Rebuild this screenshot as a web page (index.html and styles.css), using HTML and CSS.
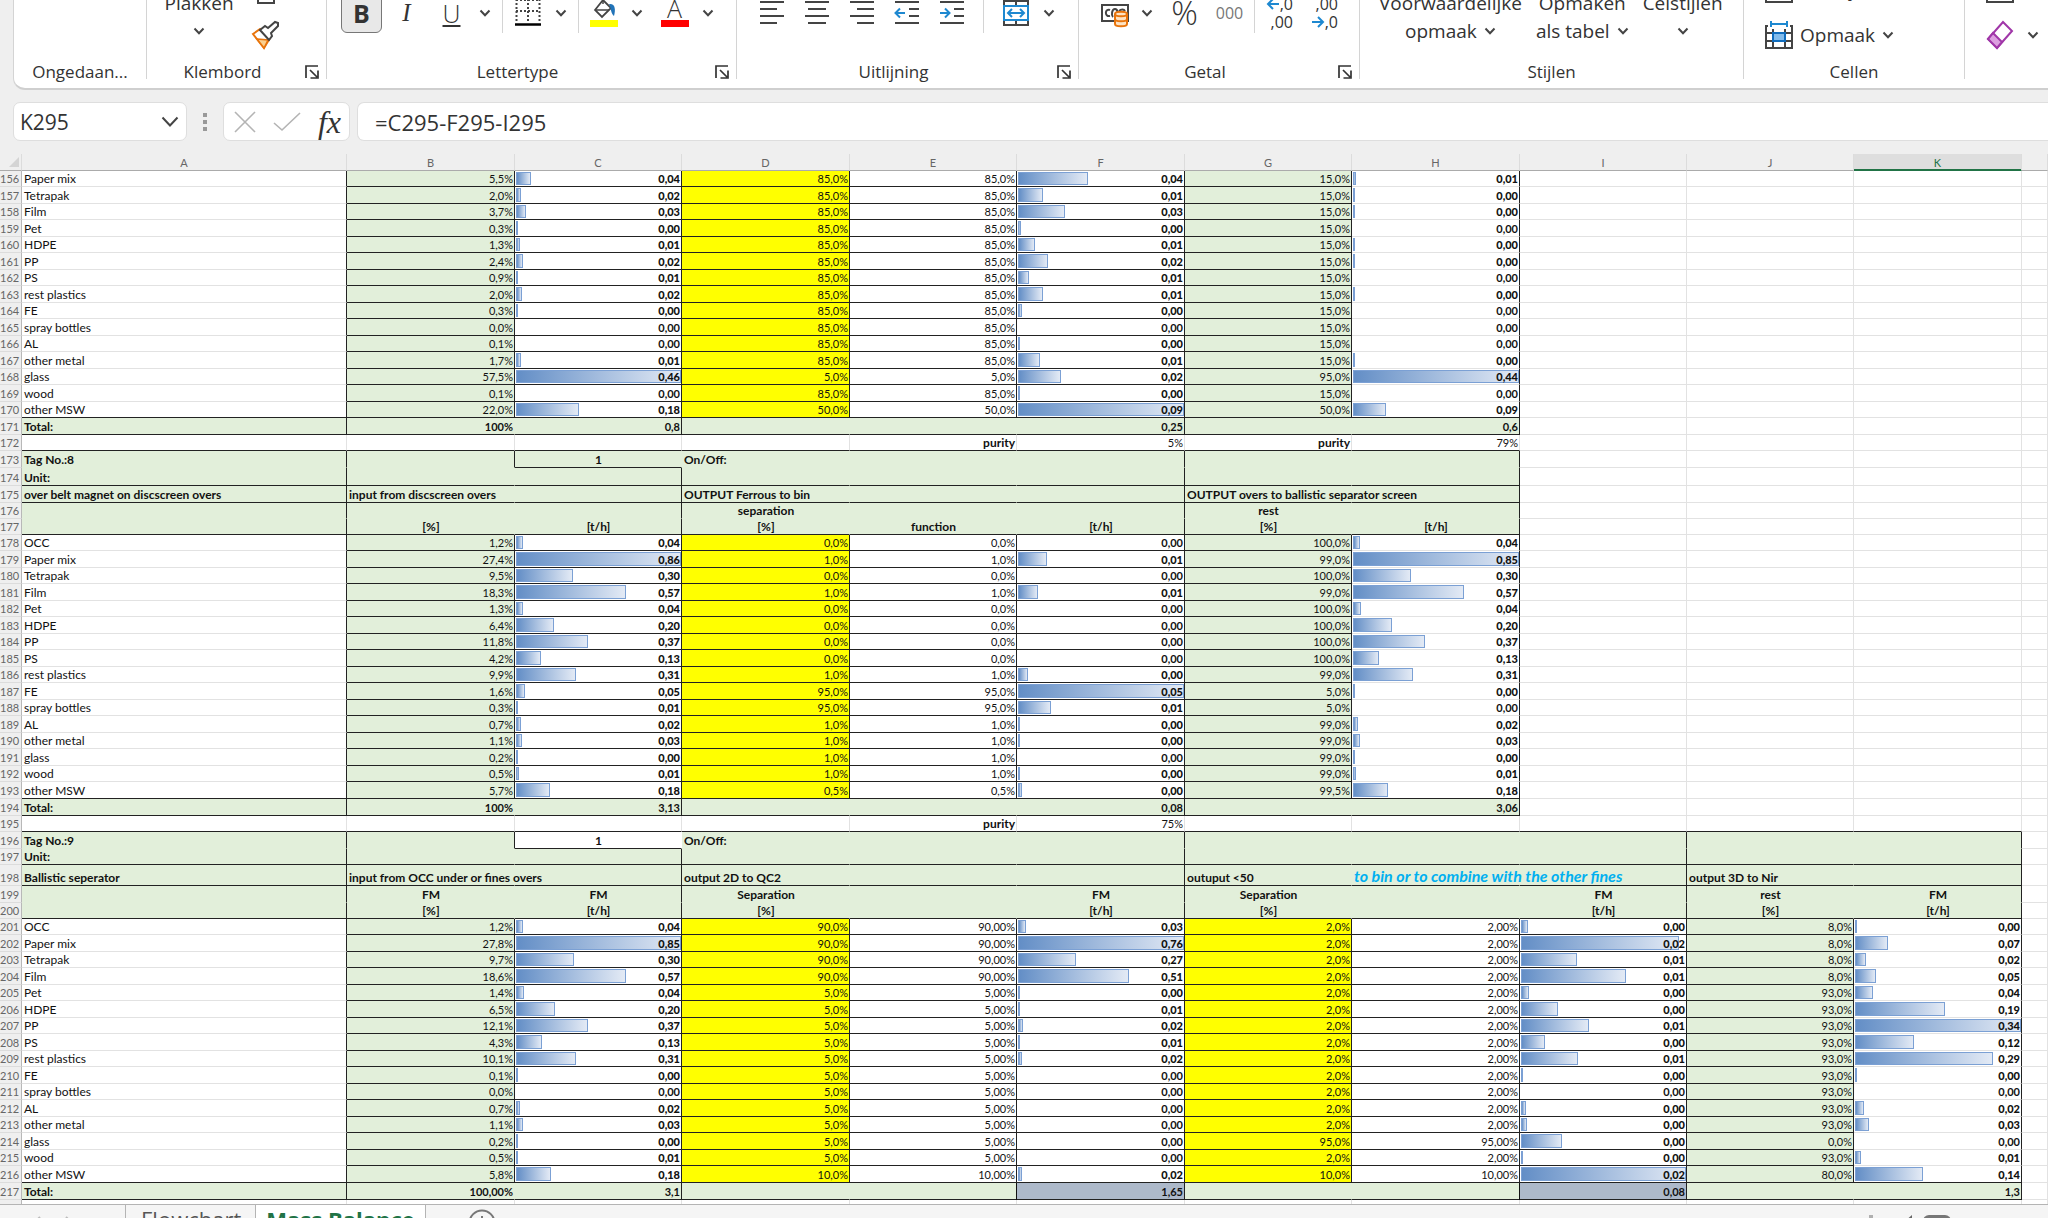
FILE: index.html
```html
<!DOCTYPE html>
<html lang="nl">
<head>
<meta charset="utf-8">
<title>Mass Balance</title>
<link rel="stylesheet" href="styles.css">
</head>
<body>
<svg class="defs" aria-hidden="true">
  <symbol id="chev" viewBox="0 0 12 8"><path d="M1.5 1.5 6 6.2 10.500 1.5" fill="none" stroke="#444" stroke-width="2"/></symbol>
  <symbol id="launch" viewBox="0 0 14 14"><path d="M1 13V1H13M5 5l7 7M13 5.500V13H5.500" fill="none" stroke="#333" stroke-width="1.700"/></symbol>
</svg>
<div class="app">
  <header class="ribbon">
    <section class="group g-undo">
      <div class="tools"></div>
      <div class="caption"><span>Ongedaan...</span></div>
    </section>
    <section class="group g-clip">
      <div class="tools">
        <button class="big paste">Plakken<span class="line"><svg class="chev"><use href="#chev"/></svg></span></button>
        <div class="stack">
          <button class="tool" aria-label="Kopiëren"><svg width="28" height="28" viewBox="0 0 28 28"><path d="M6 2h16v25H6z" fill="#fff" stroke="#444" stroke-width="2"/></svg></button>
          <button class="tool" aria-label="Opmaak kopiëren"><svg width="28" height="28" viewBox="0 0 28 28"><path d="M1 13 8 8l10 9-6 10Z" fill="#fff" stroke="#e8740c" stroke-width="2"/><path d="M5 18l11 1-4 8Z" fill="#fbd08f" stroke="#e8740c" stroke-width="1.500"/><path d="M8 9l5-4 3 2 7-6 3 1v3l-7 7 1 3-3 4Z" fill="#fff" stroke="#444" stroke-width="2"/></svg></button>
        </div>
      </div>
      <div class="caption"><span>Klembord</span><button class="launcher" aria-label="Klembord openen"><svg><use href="#launch"/></svg></button></div>
    </section>
    <section class="group g-font">
      <div class="tools upper">
        <button class="tool pressed"><b>B</b></button>
        <button class="tool"><i>I</i></button>
        <div class="split"><button class="tool light"><u>U</u></button><button class="drop" aria-label="Onderstrepen"><svg class="chev"><use href="#chev"/></svg></button></div>
        <span class="rule"></span>
        <div class="split"><button class="tool" aria-label="Randen"><svg width="28" height="28" viewBox="0 0 28 28"><path d="M2.500 0V23M25.500 0V23M14 0v23M2 1H26M2 12H26" fill="none" stroke="#444" stroke-width="2" stroke-dasharray="2 2"/><path d="M1 25.500H27" stroke="#000" stroke-width="2.500"/></svg></button><button class="drop" aria-label="Randen kiezen"><svg class="chev"><use href="#chev"/></svg></button></div>
        <span class="rule"></span>
        <div class="split"><button class="tool" aria-label="Opvulkleur"><svg width="28" height="28" viewBox="0 0 28 28"><path d="M0 21H28v7H0z" fill="#ff0"/><path d="M5 11 13 1l8 8-9 9Z" fill="#fff" stroke="#444" stroke-width="1.800"/><path d="M13 5V-3M5 11h14" stroke="#444" stroke-width="1.500"/><path d="M19 5c6-1 7 5 5 12-3-2-3-8-5-12" fill="#2173b8"/></svg></button><button class="drop" aria-label="Opvulkleur kiezen"><svg class="chev"><use href="#chev"/></svg></button></div>
        <div class="split"><button class="tool letter" aria-label="Tekstkleur">A</button><button class="drop" aria-label="Tekstkleur kiezen"><svg class="chev"><use href="#chev"/></svg></button></div>
      </div>
      <div class="caption"><span>Lettertype</span><button class="launcher" aria-label="Lettertype openen"><svg><use href="#launch"/></svg></button></div>
    </section>
    <section class="group g-align">
      <div class="tools upper">
        <button class="tool" aria-label="Links uitlijnen"><svg width="28" height="28" viewBox="0 0 28 28"><path d="M2 3H26M2 10H19M2 17H26M2 24H19" stroke="#444" stroke-width="2"/></svg></button>
        <button class="tool" aria-label="Centreren"><svg width="28" height="28" viewBox="0 0 28 28"><path d="M2 3H26M5 10H23M2 17H26M5 24H23" stroke="#444" stroke-width="2"/></svg></button>
        <button class="tool" aria-label="Rechts uitlijnen"><svg width="28" height="28" viewBox="0 0 28 28"><path d="M2 3H26M9 10H26M2 17H26M9 24H26" stroke="#444" stroke-width="2"/></svg></button>
        <button class="tool" aria-label="Inspringing verkleinen"><svg width="28" height="28" viewBox="0 0 28 28"><path d="M2 3H26M16 10H26M16 17H26M2 24H26" stroke="#444" stroke-width="2"/><path d="M12 14H3M7 9.500 2.500 14 7 18.500" fill="none" stroke="#1e88d0" stroke-width="2"/></svg></button>
        <button class="tool" aria-label="Inspringing vergroten"><svg width="28" height="28" viewBox="0 0 28 28"><path d="M2 3H26M16 10H26M16 17H26M2 24H26" stroke="#444" stroke-width="2"/><path d="M2 14H11M7 9.500 11.500 14 7 18.500" fill="none" stroke="#1e88d0" stroke-width="2"/></svg></button>
        <span class="rule wide"></span>
        <div class="split"><button class="tool" aria-label="Samenvoegen"><svg width="28" height="28" viewBox="0 0 28 28"><path d="M2 2H26V26H2ZM14 2V7M14 21V26" fill="#fff" stroke="#444" stroke-width="2"/><path d="M2 7H26V21H2Z" fill="#fff" stroke="#1e88d0" stroke-width="2"/><path d="M6 14H22M10 10 6 14l4 4M18 10l4 4-4 4" fill="none" stroke="#1e88d0" stroke-width="2"/></svg></button><button class="drop" aria-label="Samenvoegen kiezen"><svg class="chev"><use href="#chev"/></svg></button></div>
      </div>
      <div class="caption"><span>Uitlijning</span><button class="launcher" aria-label="Uitlijning openen"><svg><use href="#launch"/></svg></button></div>
    </section>
    <section class="group g-number">
      <div class="tools upper">
        <div class="split"><button class="tool" aria-label="Valuta"><svg width="28" height="28" viewBox="0 0 28 28"><path d="M2 6H28V22H2Z" fill="#fff" stroke="#444" stroke-width="2"/><path d="M10 11c-5-2-6 7 0 6M13 18c-2-2-1-8 2-8 3 0 3 5 1 7M19 12c2-2 5-2 6 0" fill="none" stroke="#444" stroke-width="2"/><path d="M15 15c0-3 12-3 12 0V25c0 3-12 3-12 0Z" fill="#fde3c4" stroke="#e8740c" stroke-width="2"/><path d="M15 15c0 3 12 3 12 0M15 20c0 3 12 3 12 0" fill="none" stroke="#e8740c" stroke-width="2"/></svg></button><button class="drop" aria-label="Valuta kiezen"><svg class="chev"><use href="#chev"/></svg></button></div>
        <button class="tool light percent">%</button>
        <button class="tool zeros">000</button>
        <span class="rule"></span>
        <button class="tool dec"><span><svg width="14" height="12" viewBox="0 0 14 12"><path d="M13 6H2M7 1 2 6l5 5" fill="none" stroke="#1e88d0" stroke-width="2"/></svg>,0</span><span>,00</span></button>
        <button class="tool dec"><span>,00</span><span><svg width="14" height="12" viewBox="0 0 14 12"><path d="M1 6H12M7 1l5 5-5 5" fill="none" stroke="#1e88d0" stroke-width="2"/></svg>,0</span></button>
      </div>
      <div class="caption"><span>Getal</span><button class="launcher" aria-label="Getal openen"><svg><use href="#launch"/></svg></button></div>
    </section>
    <section class="group g-styles">
      <div class="tools">
        <button class="big">Voorwaardelijke<span class="line">opmaak <svg class="chev"><use href="#chev"/></svg></span></button>
        <button class="big">Opmaken<span class="line">als tabel <svg class="chev"><use href="#chev"/></svg></span></button>
        <button class="big">Celstijlen<span class="line"><svg class="chev"><use href="#chev"/></svg></span></button>
      </div>
      <div class="caption"><span>Stijlen</span></div>
    </section>
    <section class="group g-cells">
      <div class="tools">
        <div class="stack">
          <button class="wide-tool"><svg width="28" height="28" viewBox="0 0 28 28"><path d="M1 2H27V26H1Z" fill="#fff" stroke="#444" stroke-width="2"/></svg>Verwijderen</button>
          <button class="wide-tool"><svg width="28" height="28" viewBox="0 0 28 28"><path d="M3 5H1V27H27V5H25M1 12H27M1 20H27M8 8V27M20 8V27" fill="none" stroke="#444" stroke-width="2"/><path d="M8 12H20V20H8Z" fill="#83bcec" stroke="#0f6cbd" stroke-width="2"/><path d="M6 3H22M6 0V6M22 0V6" stroke="#1e88d0" stroke-width="2"/></svg>Opmaak<svg class="chev"><use href="#chev"/></svg></button>
        </div>
      </div>
      <div class="caption"><span>Cellen</span></div>
    </section>
    <section class="group g-edit">
      <div class="tools">
        <div class="stack">
          <button class="tool" aria-label="Doorvoeren"><svg width="28" height="28" viewBox="0 0 28 28"><path d="M1 2H27V26H1Z" fill="#fff" stroke="#444" stroke-width="2"/></svg></button>
          <div class="split"><button class="tool" aria-label="Wissen"><svg width="28" height="28" viewBox="0 0 28 28"><path d="M17 1 26 10 11 27 2 18Z" fill="#fff" stroke="#a036a8" stroke-width="2"/><path d="M7 12 2 18l9 9 5-6Z" fill="#dc9fe0" stroke="#a036a8" stroke-width="2"/></svg></button><button class="drop" aria-label="Wissen kiezen"><svg class="chev"><use href="#chev"/></svg></button></div>
        </div>
      </div>
      <div class="caption"></div>
    </section>
  </header>

  <div class="formula-row">
    <div class="box name-box">
      <input type="text" value="K295" aria-label="Naamvak">
      <button aria-label="Naam kiezen"><svg width="18" height="11" viewBox="0 0 18 11"><path d="M1.500 1.500 9 9.500l7.500-8" fill="none" stroke="#444" stroke-width="2"/></svg></button>
    </div>
    <span class="grip"><i></i><i></i><i></i></span>
    <div class="box fx-box">
      <button aria-label="Annuleren"><svg width="22" height="22" viewBox="0 0 22 22"><path d="M1 1 21 21M21 1 1 21" stroke="#b4b4b4" stroke-width="1.600"/></svg></button>
      <button aria-label="Invoeren"><svg width="28" height="20" viewBox="0 0 28 20"><path d="M1 11 9 18 27 1" fill="none" stroke="#b4b4b4" stroke-width="1.600"/></svg></button>
      <button class="fx">fx</button>
    </div>
    <div class="box formula"><input type="text" value="=C295-F295-I295" aria-label="Formule"></div>
  </div>

  <main class="sheet">
    <table class="grid">
      <colgroup><col class="c-num"><col class="c-a"><col class="c-w"><col class="c-n"><col class="c-w"><col class="c-n"><col class="c-w"><col class="c-n"><col class="c-w"><col class="c-n"><col class="c-n"><col class="c-w"><col></colgroup>
      <thead><tr><th class="corner"><svg width="10" height="10"><path d="M10 0V10H0Z" fill="#d4d4d4"/></svg></th><th>A</th><th>B</th><th>C</th><th>D</th><th>E</th><th>F</th><th>G</th><th>H</th><th>I</th><th>J</th><th class="current">K</th><th></th></tr></thead>
      <tbody id="rows"></tbody>
    </table>
  </main>

  <footer class="tabs">
    <div class="nav"><svg width="8" height="12" viewBox="0 0 8 12"><path d="M7 1 2 6l5 5" fill="none" stroke="#bbb" stroke-width="2"/></svg><svg width="8" height="12" viewBox="0 0 8 12"><path d="M1 1l5 5-5 5" fill="none" stroke="#bbb" stroke-width="2"/></svg></div>
    <button class="tab">Flowchart</button>
    <button class="tab active">Mass Balance</button>
    <button class="add" aria-label="Nieuw blad"><svg width="28" height="28" viewBox="0 0 28 28"><circle cx="14" cy="14" r="12.500" fill="none" stroke="#777" stroke-width="2"/><path d="M14 7V21M7 14H21" stroke="#777" stroke-width="2"/></svg></button>
    <div class="scroll"><span class="dots"></span><svg width="10" height="14" viewBox="0 0 10 14"><path d="M9 0V14L1 7Z" fill="#666"/></svg><span class="thumb"></span></div>
  </footer>
</div>
<script src="sheet.js"></script>
</body>
</html>
```
FILE: styles.css
```css
* { box-sizing: border-box; }
body { margin: 0; background: #efefef; color: #333; font-family: "Open Sans", "Noto Sans", sans-serif; }
button, input { font: inherit; color: inherit; background: none; border: 0; margin: 0; padding: 0; }
svg { display: block; flex: none; overflow: visible; }
.defs { position: absolute; width: 0; height: 0; }
.app { display: flex; flex-direction: column; height: 100vh; overflow: hidden; }

/* Ribbon */
.ribbon { display: flex; flex: none; height: 90px; margin-left: 13px; overflow: hidden; background: #fff; border-left: 1px solid #d4d4d4; border-bottom: 2px solid #cfcfcf; border-radius: 0 0 0 12px; }
.group { display: flex; flex: none; flex-direction: column; height: 83px; background: linear-gradient(#d4d4d4, #d4d4d4) right top / 1px 79px no-repeat; padding-right: 1px; }
.g-undo { width: 133px; }
.g-clip { width: 180px; }
.g-font { width: 410px; }
.g-align { width: 342px; }
.g-number { width: 281px; }
.g-styles { width: 384px; }
.g-cells { width: 221px; }
.g-edit { flex: 1; background: none; }
.tools { display: flex; flex: 1; min-height: 0; align-items: flex-end; gap: 4px; padding: 0 14px 16px; }
.tools.upper { padding-bottom: 28px; }
.caption { display: flex; flex: none; height: 22px; font-size: 17px; line-height: 22px; }
.caption span { flex: 1; text-align: center; }
.launcher { display: flex; width: 28px; height: 18px; align-items: flex-end; padding-left: 7px; }
.launcher svg { width: 14px; height: 14px; }
.tool { display: flex; width: 41px; height: 41px; align-items: center; justify-content: center; font-size: 25px; line-height: 30px; }
.tool i { font-family: "Liberation Serif", serif; }
.light { font-weight: 300; }
.pressed { background: #e8e8e8; border: 1px solid #777; border-radius: 6px; }
.letter { align-items: flex-end; padding-bottom: 10px; font-weight: 300; background: linear-gradient(#f00, #f00) center 28px / 28px 7px no-repeat; }
.split { display: flex; }
.drop { display: flex; width: 26px; align-items: center; justify-content: center; }
.chev { width: 12px; height: 8px; }
.rule { width: 1px; height: 41px; background: #d4d4d4; }
.rule.wide { margin: 0 7px; }
.percent { font-size: 33px; }
.zeros { font-size: 16px; color: #777; }
.dec { flex-direction: column; align-items: flex-end; padding-right: 7px; font-size: 16px; line-height: 18px; }
.dec span { display: flex; align-items: center; }
.big { display: flex; flex-direction: column; align-items: center; font-size: 19px; line-height: 28px; padding: 0 5px; }
.big .line { display: flex; height: 28px; align-items: center; gap: 7px; }
.paste { width: 76px; }
.stack { display: flex; flex-direction: column; gap: 4px; margin-bottom: -10px; }
.wide-tool { display: flex; height: 41px; align-items: center; gap: 7px; font-size: 19px; }
.g-clip .tools { gap: 8px; }
.g-cells .tools { padding-left: 21px; }

/* Formula bar */
.formula-row { display: flex; flex: none; height: 64px; padding: 12px 0 13px 13px; font-size: 21px; }
.box { display: flex; align-items: center; background: #fff; border: 1px solid #dedede; border-radius: 7px; }
.box input { width: 100%; min-width: 0; height: 100%; outline: 0; }
.name-box { width: 174px; padding: 0 7px 0 6px; }
.grip { display: flex; flex-direction: column; width: 36px; align-items: center; justify-content: center; gap: 3px; }
.grip i { width: 4px; height: 4px; background: #999; }
.fx-box { width: 127px; justify-content: space-between; padding: 0 8px 0 10px; }
.fx { font: italic 32px/36px "Liberation Serif", serif; }
.formula { flex: 1; margin-left: 7px; padding-left: 17px; border-right: 0; border-radius: 7px 0 0 7px; font-size: 22px; }

/* Worksheet */
.sheet { flex: 1; min-height: 0; overflow: hidden; }
.grid { width: 100%; table-layout: fixed; border-collapse: separate; border-spacing: 0; font-family: Lato, sans-serif; font-size: 11px; line-height: 15px; color: #111; background: #fff; }
.c-num { width: 22px; }
.c-a { width: 325px; }
.c-w { width: 168px; }
.c-n { width: 167px; }
.grid th { padding: 0; font-weight: 400; color: #666; background: #efefef; }
.grid thead th { height: 17px; border-right: 1px solid #dcdcdc; border-bottom: 1px solid #ababab; vertical-align: bottom; }
.grid thead .corner svg { margin: 0 0 3px 9px; }
.grid thead .current { color: #217346; background: #dedede; border-bottom-color: #217346; box-shadow: inset 0 -1px #217346; }
.grid tbody th { text-align: right; padding-right: 2px; border-right: 1px solid #b8b8b8; border-bottom: 1px solid #dcdcdc; vertical-align: bottom; }
.grid td { height: 16px; padding: 0 1px 0 2px; border-right: 1px solid #e2e2e2; border-bottom: 1px solid #e2e2e2; white-space: nowrap; vertical-align: bottom; text-align: right; }
.grid tr.h17 td { height: 17px; }
.grid tr.h18 td { height: 18px; }
.grid tr.h21 td { height: 21px; }
.grid td.l { text-align: left; font-size: 12px; }
.grid td.c { text-align: center; font-size: 12px; }
.grid td.big-text { font-size: 12px; }
.grid td.b { font-weight: 700; }
.grid td.green { background: #e2efda; border-color: #e2efda; }
.grid td.yellow { background: #ff0; }
.grid td.blue { background: #adb9ca; box-shadow: 0 -1px #111, -1px 0 #111; }
.grid td.white { background: #fff; border-color: #fff; }
.grid td.r { border-right-color: #222; }
.grid td.u { border-bottom-color: #222; }
.grid td.note { font-size: 16px; font-style: italic; color: #00b0f0; line-height: 19px; }
.grid td.bar { position: relative; }
.bar i { position: absolute; left: 1px; top: 1px; bottom: 1px; border: 1px solid #7ba0d4; background: linear-gradient(90deg, #638ec6, #e3eaf5); }
.bar b { position: relative; }

/* Sheet tabs */
.tabs { display: flex; flex: none; height: 14px; overflow: hidden; align-items: flex-start; background: #f5f5f5; border-top: 1px solid #b4b4b4; font-size: 22px; line-height: 28px; }
.nav { display: flex; gap: 24px; width: 125px; padding: 11px 0 0 33px; }
.tab { padding: 0 14px 0 15px; border-left: 1px solid #b4b4b4; color: #555; }
.tab.active { padding: 0 10px; background: #fff; border-right: 1px solid #b4b4b4; color: #217346; font-weight: 700; }
.add { padding: 4px 0 0 42px; }
.scroll { display: flex; gap: 10px; width: 195px; height: 14px; margin-left: auto; padding: 10px 0 0 16px; }
.dots { width: 4px; height: 4px; margin-right: 20px; background: #b0b0b0; }
.thumb { width: 28px; height: 14px; background: #777; border-radius: 6px; }
```
FILE: sheet.js
```js
// Width of a full data bar's cell, in the units the bar lengths are given in.
const FULL = 166;
const COLS = 'ABCDEFGHIJKL';
const NAMES = ['OCC', 'Paper mix', 'Tetrapak', 'Film', 'Pet', 'HDPE', 'PP', 'PS', 'rest plastics', 'FE', 'spray bottles', 'AL', 'other metal', 'glass', 'wood', 'other MSW'];
const rows = [];
const split = s => s.split(' ');

function add(height, cells) {
  rows.push({ height, cells });
}

// Data rows: each column has a class, values, and maybe bar lengths.
function data(names, cols) {
  names.forEach((name, i) => {
    const last = i === names.length - 1;
    const cells = { A: { t: name, k: 'l r' + (last ? ' u' : '') } };
    for (const [letter, k, values, bars] of cols) {
      cells[letter] = { t: values[i], k: k + (last ? ' u' : ''), bar: bars ? +bars[i] : undefined };
    }
    add(i % 2 ? 17 : 16, cells);
  });
}

// Green heading and total rows.
function green(height, letters, rights, under, texts) {
  const cells = {};
  for (const l of letters) {
    const [t, k] = texts[l] || ['', ''];
    cells[l] = { t, k: 'green b ' + (rights.includes(l) ? 'r ' : '') + (under ? 'u ' : '') + k };
  }
  add(height, cells);
}

// White row between two blocks.
function gap(height, letters, texts) {
  const cells = {};
  for (const l of letters) {
    cells[l] = { t: texts[l] || '', k: 'u' + (texts[l] === 'purity' ? ' b big-text' : '') };
  }
  add(height, cells);
}

const P = n => n + '%';

// Block 7
const f1 = split('85,0 85,0 85,0 85,0 85,0 85,0 85,0 85,0 85,0 85,0 85,0 85,0 5,0 85,0 50,0').map(P);
data(NAMES.slice(1), [
  ['B', 'green r u', split('5,5 2,0 3,7 0,3 1,3 2,4 0,9 2,0 0,3 0,0 0,1 1,7 57,5 0,1 22,0').map(P)],
  ['C', 'b r u', split('0,04 0,02 0,03 0,00 0,01 0,02 0,01 0,02 0,00 0,00 0,00 0,01 0,46 0,00 0,18'), split('15 5 10 1 4 7 2 6 1 0 0 5 165 0 63')],
  ['D', 'yellow r u', f1],
  ['E', 'r u', f1],
  ['F', 'b r u', split('0,04 0,01 0,03 0,00 0,01 0,02 0,01 0,01 0,00 0,00 0,00 0,01 0,02 0,00 0,09'), split('70 25 47 3 17 30 11 25 4 0 2 22 43 1 165')],
  ['G', 'green r u', split('15,0 15,0 15,0 15,0 15,0 15,0 15,0 15,0 15,0 15,0 15,0 15,0 95,0 15,0 50,0').map(P)],
  ['H', 'b r', split('0,01 0,00 0,00 0,00 0,00 0,00 0,00 0,00 0,00 0,00 0,00 0,00 0,44 0,00 0,09'), split('3 1 2 0 1 1 0 1 0 0 0 1 165 0 33')]
]);
green(17, 'ABCDEFGH', 'ACFH', true, { A: ['Total:', 'l'], B: ['100%', ''], C: ['0,8', ''], F: ['0,25', ''], H: ['0,6', ''] });
gap(16, 'ABCDEFGH', { E: 'purity', F: '5%', G: 'purity', H: '79%' });

// Block 8
green(17, 'ABCDEFGH', 'ABFH', false, { A: ['Tag No.:8', 'l'], C: ['1', 'c u'], D: ['On/Off:', 'l'] });
green(18, 'ABCDEFGH', 'ACFH', true, { A: ['Unit:', 'l'] });
green(17, 'ABCDEFGH', 'ACFH', true, { A: ['over belt magnet on discscreen overs', 'l'], B: ['input from discscreen overs', 'l'], D: ['OUTPUT Ferrous to bin', 'l'], G: ['OUTPUT overs to ballistic separator screen', 'l'] });
green(16, 'ABCDEFGH', 'ACFH', false, { D: ['separation', 'c'], G: ['rest', 'c'] });
green(16, 'ABCDEFGH', 'ACFH', true, { B: ['[%]', 'c'], C: ['[t/h]', 'c'], D: ['[%]', 'c'], E: ['function', 'c'], F: ['[t/h]', 'c'], G: ['[%]', 'c'], H: ['[t/h]', 'c'] });
const f2 = split('0,0 1,0 0,0 1,0 0,0 0,0 0,0 0,0 1,0 95,0 95,0 1,0 1,0 1,0 1,0 0,5').map(P);
data(NAMES, [
  ['B', 'green r u', split('1,2 27,4 9,5 18,3 1,3 6,4 11,8 4,2 9,9 1,6 0,3 0,7 1,1 0,2 0,5 5,7').map(P)],
  ['C', 'b r u', split('0,04 0,86 0,30 0,57 0,04 0,20 0,37 0,13 0,31 0,05 0,01 0,02 0,03 0,00 0,01 0,18'), split('7 165 57 110 7 38 72 25 60 9 2 5 6 1 3 34')],
  ['D', 'yellow r u', f2],
  ['E', 'r u', f2],
  ['F', 'b r u', split('0,00 0,01 0,00 0,01 0,00 0,00 0,00 0,00 0,00 0,05 0,01 0,00 0,00 0,00 0,00 0,00'), split('0 29 0 20 0 0 0 0 10 165 33 1 1 0 1 4')],
  ['G', 'green r u', split('100,0 99,0 100,0 99,0 100,0 100,0 100,0 100,0 99,0 5,0 5,0 99,0 99,0 99,0 99,0 99,5').map(P)],
  ['H', 'b r', split('0,04 0,85 0,30 0,57 0,04 0,20 0,37 0,13 0,31 0,00 0,00 0,02 0,03 0,00 0,01 0,18'), split('7 165 58 110 8 39 72 26 60 1 0 5 7 1 3 35')]
]);
green(17, 'ABCDEFGH', 'ACFH', true, { A: ['Total:', 'l'], B: ['100%', ''], C: ['3,13', ''], F: ['0,08', ''], H: ['3,06', ''] });
gap(16, 'ABCDEFGHIJK', { E: 'purity', F: '75%' });

// Block 9
const ALL = 'ABCDEFGHIJK';
green(17, ALL, 'ABFIK', false, { A: ['Tag No.:9', 'l'], C: ['1', 'c white u'], D: ['On/Off:', 'l'] });
green(16, ALL, 'ACFIK', true, { A: ['Unit:', 'l'] });
green(21, ALL, 'ACFIK', true, { A: ['Ballistic seperator', 'l'], B: ['input from OCC under or fines overs', 'l'], D: ['output 2D to QC2', 'l'], G: ['outuput <50', 'l'], H: ['to bin or to combine with the other fines', 'l note'], J: ['output 3D to Nir', 'l'] });
green(17, ALL, 'ACFIK', false, { B: ['FM', 'c'], C: ['FM', 'c'], D: ['Separation', 'c'], F: ['FM', 'c'], G: ['Separation', 'c'], I: ['FM', 'c'], J: ['rest', 'c'], K: ['FM', 'c'] });
green(16, ALL, 'ACFIK', true, { B: ['[%]', 'c'], C: ['[t/h]', 'c'], D: ['[%]', 'c'], F: ['[t/h]', 'c'], G: ['[%]', 'c'], I: ['[t/h]', 'c'], J: ['[%]', 'c'], K: ['[t/h]', 'c'] });
const d3 = split('90,0 90,0 90,0 90,0 5,0 5,0 5,0 5,0 5,0 5,0 5,0 5,0 5,0 5,0 5,0 10,0');
const g3 = split('2,0 2,0 2,0 2,0 2,0 2,0 2,0 2,0 2,0 2,0 2,0 2,0 2,0 95,0 2,0 10,0');
// Columns E and H repeat D and G with two decimals.
data(NAMES, [
  ['B', 'green r u', split('1,2 27,8 9,7 18,6 1,4 6,5 12,1 4,3 10,1 0,1 0,0 0,7 1,1 0,2 0,5 5,8').map(P)],
  ['C', 'b r u', split('0,04 0,85 0,30 0,57 0,04 0,20 0,37 0,13 0,31 0,00 0,00 0,02 0,03 0,00 0,01 0,18'), split('7 165 58 110 8 39 72 26 60 1 0 4 7 1 2 35')],
  ['D', 'yellow r u', d3.map(P)],
  ['E', 'r u', d3.map(v => v + '0%')],
  ['F', 'b r u', split('0,03 0,76 0,27 0,51 0,00 0,01 0,02 0,01 0,02 0,00 0,00 0,00 0,00 0,00 0,00 0,02'), split('8 165 58 110 1 2 5 2 4 0 0 0 0 0 0 4')],
  ['G', 'yellow r u', g3.map(P)],
  ['H', 'r u', g3.map(v => v + '0%')],
  ['I', 'b r u', split('0,00 0,02 0,01 0,01 0,00 0,00 0,01 0,00 0,01 0,00 0,00 0,00 0,00 0,00 0,00 0,02'), split('7 158 56 105 8 37 68 24 57 1 0 5 6 41 2 165')],
  ['J', 'green r u', split('8,0 8,0 8,0 8,0 93,0 93,0 93,0 93,0 93,0 93,0 93,0 93,0 93,0 0,0 93,0 80,0').map(P)],
  ['K', 'b r', split('0,00 0,07 0,02 0,05 0,04 0,19 0,34 0,12 0,29 0,00 0,00 0,02 0,03 0,00 0,01 0,14'), split('2 33 11 21 18 89 165 59 137 1 0 9 14 0 6 68')]
]);
green(17, ALL, 'ACEFHIK', true, { A: ['Total:', 'l'], B: ['100,00%', ''], C: ['3,1', ''], F: ['1,65', 'blue'], I: ['0,08', 'blue'], K: ['1,3', ''] });
add(16, { F: { t: '%', k: '' }, I: { t: '%', k: '' }, K: { t: '%', k: '' } });

const body = document.getElementById('rows');
rows.forEach((row, n) => {
  const tr = document.createElement('tr');
  tr.className = 'h' + row.height;
  const th = document.createElement('th');
  th.scope = 'row';
  th.textContent = 156 + n;
  tr.append(th);
  for (const letter of COLS) {
    const td = document.createElement('td');
    const cell = row.cells[letter];
    if (cell) {
      td.className = cell.k;
      if (cell.bar) {
        td.classList.add('bar');
        const bar = document.createElement('i');
        bar.style.width = (cell.bar / FULL * 100).toFixed(1) + '%';
        const label = document.createElement('b');
        label.textContent = cell.t;
        td.append(bar, label);
      } else {
        td.textContent = cell.t;
      }
    }
    tr.append(td);
  }
  body.append(tr);
});
```
